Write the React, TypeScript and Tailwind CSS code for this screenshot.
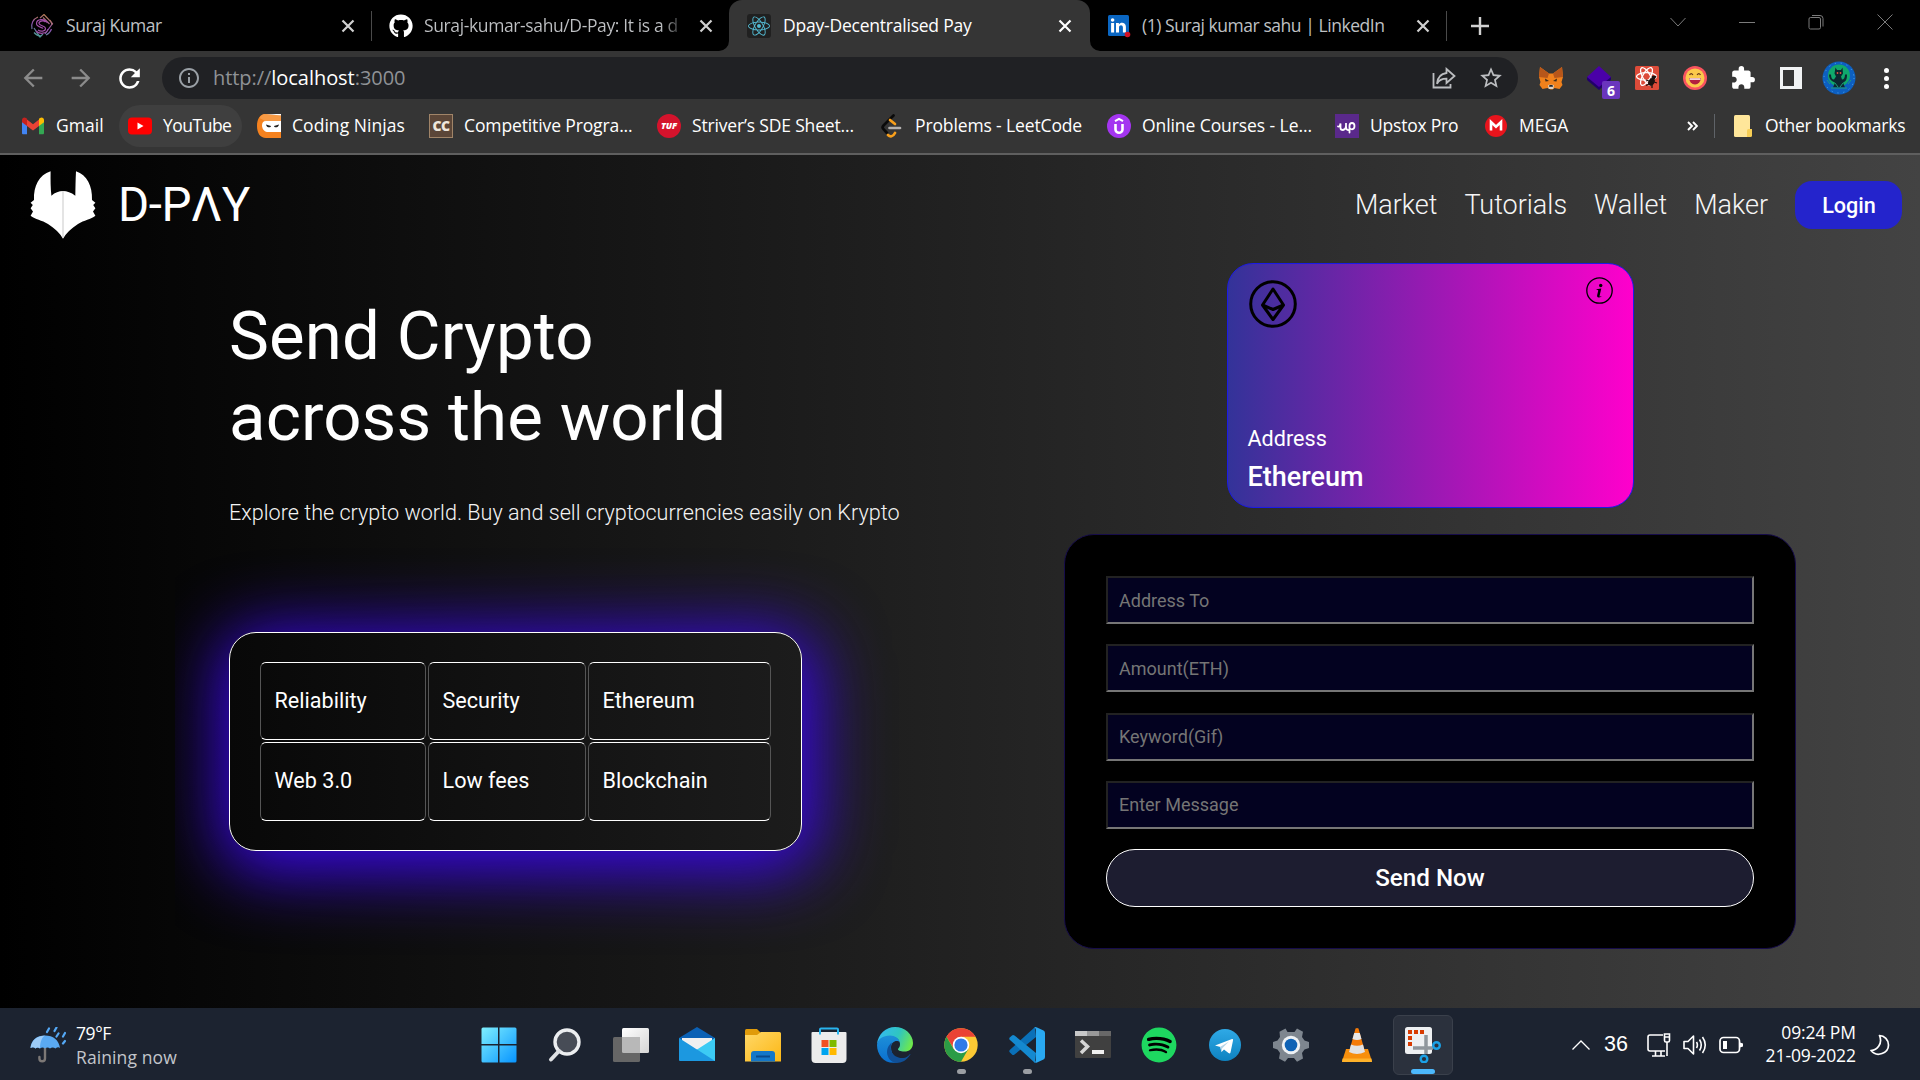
import React from "react";
import { FaGithub, FaReact, FaSpotify } from "react-icons/fa";
import {
  MdArrowBack,
  MdArrowForward,
  MdExtension,
  MdInfoOutline,
  MdRefresh,
  MdStarBorder,
} from "react-icons/md";

/* ---------- browser chrome ---------- */

const Cross = ({ className = "" }: { className?: string }) => (
  <svg viewBox="0 0 14 14" className={`h-[14px] w-[14px] shrink-0 ${className}`}>
    <path d="M1.500 1.500l11 11M12.500 1.500l-11 11" stroke="currentColor" strokeWidth="2.200" />
  </svg>
);

const PortfolioIcon = () => (
  <svg viewBox="0 0 24 24" className="h-6 w-6 shrink-0" fill="none" strokeWidth="1.200">
    <defs>
      <linearGradient id="pf" x1="0.700" y1="0" x2="0.300" y2="1">
        <stop offset="0" stopColor="#b9824a" />
        <stop offset="0.500" stopColor="#8d4fb0" />
        <stop offset="1" stopColor="#4d9a94" />
      </linearGradient>
    </defs>
    <path d="M8 3A10 10 0 0 0 2 15M4 18.500a10 10 0 0 0 7 3.500M16 21a10 10 0 0 0 5.500-6M22 11a10 10 0 0 0-2-5" stroke="url(#pf)" />
    <path d="M10 4l4-3.500 8.500 9L15 20M13 3.500l6.500 6.500M4 14l6 9 3-3" stroke="url(#pf)" />
    <path
      d="M15.500 8c-2-2-7-1-6.500 1.500s6.500 2 6.500 5-5 3.500-7.500 1.500M17.500 9c-3-5-11-4-11 .5 0 4 6 3.500 6.500 5M6 17c3 3.500 11 3 12-2"
      stroke="#a04fa8"
    />
  </svg>
);

const LinkedInIcon = () => (
  <svg viewBox="0 0 24 24" className="h-6 w-6 shrink-0">
    <rect x="1" y="1" width="21" height="21" rx="1.500" fill="#0a66c2" />
    <circle cx="5.600" cy="6" r="1.800" fill="#fff" />
    <path
      d="M4.100 9h3v9.500h-3zM9 9h2.900v1.400c1.400-2.500 7-2.500 7 2.400v5.700h-3v-5c0-3-3.900-2.800-3.900 0v5H9z"
      fill="#fff"
    />
    <circle cx="20.500" cy="20.500" r="2.800" fill="#d11124" />
  </svg>
);

function TabStrip() {
  return (
    <div className="flex h-[51px] items-center bg-black text-[17.5px] text-[#bfc1c4]">
      <div className="flex h-full w-[371px] items-center pl-[30px]">
        <PortfolioIcon />
        <span className="ml-3 grow tracking-[-0.45px] whitespace-nowrap">Suraj Kumar</span>
        <Cross className="mr-4 text-[#d0d0d0]" />
      </div>
      <div className="h-[30px] w-px bg-[#4a4a4a]" />
      <div className="flex h-full w-[357px] items-center pl-[17px]">
        <FaGithub className="h-6 w-6 shrink-0 text-white" />
        <span className="ml-[11px] w-[263px] bg-linear-to-r from-[#bfc1c4] from-90% to-transparent bg-clip-text tracking-[-0.38px] whitespace-nowrap text-transparent">
          Suraj-kumar-sahu/D-Pay: It is a d
        </span>
        <Cross className="ml-[12px] text-[#d0d0d0]" />
      </div>
      <div className="relative flex h-full w-[361px] items-center rounded-t-[13px] bg-[#353535] pl-[18px] text-white">
        <svg viewBox="0 0 10 10" className="absolute bottom-0 -left-[10px] h-[10px] w-[10px]">
          <path d="M10 0v10H0A10 10 0 0 0 10 0z" fill="#353535" />
        </svg>
        <svg viewBox="0 0 10 10" className="absolute -right-[10px] bottom-0 h-[10px] w-[10px]">
          <path d="M0 0v10h10A10 10 0 0 1 0 0z" fill="#353535" />
        </svg>
        <div className="flex h-6 w-6 shrink-0 items-center justify-center rounded-[3px] bg-[#202020]">
          <FaReact className="h-[22px] w-[22px] text-[#53b9d1]" />
        </div>
        <span className="ml-3 grow tracking-[-0.22px] whitespace-nowrap">Dpay-Decentralised Pay</span>
        <Cross className="mr-[18px]" />
      </div>
      <div className="flex h-full w-[356px] items-center pl-[17px]">
        <LinkedInIcon />
        <span className="ml-[11px] grow tracking-[-0.45px] whitespace-nowrap">
          (1) Suraj kumar sahu | LinkedIn
        </span>
        <Cross className="mr-[16px] text-[#d0d0d0]" />
      </div>
      <div className="h-[30px] w-px bg-[#4a4a4a]" />
      <svg viewBox="0 0 18 18" className="ml-6 h-[18px] w-[18px]">
        <path d="M9 0v18M0 9h18" stroke="#d0d0d0" strokeWidth="2.400" />
      </svg>
      <div className="mb-2 ml-auto flex items-center gap-[53px] pr-[27px] text-[#7b7b7b]">
        <svg viewBox="0 0 16 16" className="h-4 w-4" fill="none" stroke="currentColor">
          <path d="M.5 4l7.500 8 7.500-8" />
        </svg>
        <svg viewBox="0 0 16 16" className="h-4 w-4" fill="none" stroke="currentColor">
          <path d="M0 8.500h16" />
        </svg>
        <svg viewBox="0 0 16 16" className="h-4 w-4" fill="none" stroke="currentColor">
          <rect x="1" y="3.500" width="11.500" height="11.500" rx="1.500" />
          <path d="M4 1.500h8a3 3 0 0 1 3 3v8" />
        </svg>
        <svg viewBox="0 0 16 16" className="h-4 w-4" fill="none" stroke="currentColor">
          <path d="M.5.5l15 15M15.500.5l-15 15" />
        </svg>
      </div>
    </div>
  );
}

const ShareIcon = () => (
  <svg viewBox="0 0 24 24" className="h-6 w-6" fill="none" stroke="#bcbec1" strokeWidth="1.800">
    <path d="M1.500 7v14.500h17V18" />
    <path d="M14.500 3l8 7-8 7v-4.300c-4.500 0-7.500 1.300-9.500 5 .5-6 4-10 9.500-10.700z" />
  </svg>
);

const FoxIcon = () => (
  <svg viewBox="0 0 24 24" className="h-6 w-6">
    <path d="M1 1l9 6.500h4L23 1l1 10-1.500 5 1 3-3 4-5-1-2 1.500h-2L8.500 22l-5 1-3-4 1-3L0 11z" fill="#f0811c" />
    <path d="M1 1l9 6.500-1.500 4.500L0 11zM23 1l-9 6.500 1.500 4.500L24 11z" fill="#b7561a" />
    <path d="M6 12.500l4 2.500-3.500.5zM18 12.500L14 15l3.500.5z" fill="#3a2a1c" />
    <path d="M9 19.500l1-.8h4l1 .8-.8 3.500H9.800z" fill="#d8d0c4" />
    <path d="M10.500 19h3l.5 1.800h-4z" fill="#20242b" />
  </svg>
);

const ReactDevIcon = () => (
  <svg viewBox="0 0 24 24" className="h-6 w-6" fill="none">
    <rect width="24" height="24" rx="1.500" fill="#dd4b39" />
    <g stroke="#fff" strokeWidth="1.300">
      <ellipse cx="11.500" cy="10.500" rx="10" ry="3.800" />
      <ellipse cx="11.500" cy="10.500" rx="10" ry="3.800" transform="rotate(60 11.500 10.500)" />
      <ellipse cx="11.500" cy="10.500" rx="10" ry="3.800" transform="rotate(120 11.500 10.500)" />
    </g>
    <ellipse cx="16.500" cy="16" rx="3" ry="4" fill="#1c1210" transform="rotate(30 16.500 16)" />
    <circle cx="18.500" cy="11.500" r="1.900" fill="#1c1210" />
    <path d="M11 14l3 1M11 19.500l4-2M21 10l-2 3M22 17l-3-1M17 22l0-3" stroke="#1c1210" strokeWidth="1.300" />
  </svg>
);

const SmileIcon = () => (
  <svg viewBox="0 0 24 24" className="h-6 w-6">
    <circle cx="12" cy="12" r="12" fill="#f9545f" />
    <circle cx="12" cy="12" r="9.500" fill="#fbc94b" />
    <path d="M6 12h12a6 6.500 0 0 1-12 0z" fill="#b3203f" />
    <path d="M6.500 12.300h11v1.500h-11z" fill="#fff" />
    <path d="M6.500 9q1.700-2.800 3.400 0M14.100 9q1.700-2.800 3.400 0" stroke="#6b3a1a" strokeWidth="1.300" fill="none" />
  </svg>
);

const AvatarIcon = () => (
  <svg viewBox="0 0 34 34" className="h-[34px] w-[34px]">
    <circle cx="17" cy="17" r="16.500" fill="#0d5fc0" />
    <circle cx="17" cy="14.500" r="11" fill="#10a86c" />
    <circle cx="17" cy="17" r="15" fill="none" stroke="#52a9ee" strokeDasharray="1 5" />
    <path
      d="M13.500 6.500l1.500 2.500h4l1.500-2.500.5 6-2 3 1 3c2 0 3-2 3-5h2c0 5-1 7-4 8l2 5H11l2-5c-3-1-6-3-6-8h2c0 3 1 5 3 5l2-3-1.500-3z"
      fill="#0c2830"
    />
    <path d="M9 27h16M13 22l3 4M21 22l-3 4M5 19l3 4M29 19l-3 4" stroke="#1f9d7c" />
    <circle cx="15.500" cy="12" r=".9" fill="#e5503f" />
    <circle cx="18.500" cy="12" r=".9" fill="#e5503f" />
  </svg>
);

function AddressBar() {
  return (
    <div className="flex h-[54px] items-center bg-[#353535]">
      <div className="flex w-[162px] items-center gap-5 pl-[19px]">
        <MdArrowBack className="h-7 w-7 text-[#8b8b8b]" />
        <MdArrowForward className="h-7 w-7 text-[#8b8b8b]" />
        <MdRefresh className="-ml-px h-[31px] w-[31px] text-white" />
      </div>
      <div className="flex h-[42px] w-[1356px] items-center rounded-full bg-[#202124] pr-[14px] pl-[15px]">
        <MdInfoOutline className="h-6 w-6 text-[#9aa0a6]" />
        <span className="ml-[12px] grow text-[20px] tracking-[-0.05px] text-[#8f9296]">
          http://<span className="text-white">localhost</span>:3000
        </span>
        <ShareIcon />
        <MdStarBorder className="ml-[22px] h-[26px] w-[26px] text-[#bcbec1]" />
      </div>
      <div className="ml-[21px] flex items-center">
        <FoxIcon />
        <div className="relative ml-6 h-6 w-6">
          <svg viewBox="0 0 24 24" className="h-6 w-6">
            <path d="M0 14l12 10 12-10v-3H0z" fill="#21006a" />
            <path d="M12 0l12 11-12 10L0 11z" fill="#4a00a8" />
          </svg>
          <div className="absolute top-[15px] left-[15px] flex h-[18px] w-[18px] items-center justify-center rounded-[2px] bg-[#6a35bd] text-[14px] font-bold text-white">
            6
          </div>
        </div>
        <div className="ml-6">
          <ReactDevIcon />
        </div>
        <div className="ml-6">
          <SmileIcon />
        </div>
        <MdExtension className="ml-[23px] h-[26px] w-[26px] text-white" />
        <div className="ml-[24px] h-[22px] w-[22px] border-[3px] border-r-8 border-[#f1f3f4]" />
        <div className="ml-[20px]">
          <AvatarIcon />
        </div>
        <div className="ml-[28px] flex flex-col gap-[3px]">
          <div className="h-[5px] w-[5px] rounded-full bg-white" />
          <div className="h-[5px] w-[5px] rounded-full bg-white" />
          <div className="h-[5px] w-[5px] rounded-full bg-white" />
        </div>
      </div>
    </div>
  );
}

const GmailIcon = () => (
  <svg viewBox="0 0 24 24" className="h-6 w-6">
    <path d="M1 6v13c0 .8.500 1.300 1.300 1.300H6V10z" fill="#4285f4" />
    <path d="M23 6v13c0 .8-.5 1.300-1.300 1.300H18V10z" fill="#34a853" />
    <path d="M6 5.500l6 4.800 6-4.800V12l-6 4.500L6 12z" fill="#ea4335" />
    <path d="M1 6c0-2.300 2.300-3.300 4-2l1 .8V12L1 8.300z" fill="#c5221f" />
    <path d="M23 6c0-2.300-2.300-3.300-4-2l-1 .8V12l5-3.700z" fill="#fbbc04" />
  </svg>
);

const YouTubeIcon = () => (
  <svg viewBox="0 0 24 24" className="h-6 w-6">
    <rect x="0" y="3.500" width="24" height="17" rx="4" fill="#f00" />
    <path d="M9.500 8.500v7l6-3.500z" fill="#fff" />
  </svg>
);

const NinjaIcon = () => (
  <svg viewBox="0 0 24 24" className="h-6 w-6">
    <path d="M24 1.500L8 0C3 0 0 5 0 12s3 12 9 12h15v-6H10V6h14z" fill="#f5821f" />
    <path d="M24 1.500L8 0C6 0 4 1.500 2.500 4L8 7h16z" fill="#f79a45" />
    <path d="M9 0h15v1.500z" fill="#fff" />
    <path d="M24 7H9c-3 0-4 2-4 4.500S7 18 10 18h14z" fill="#fff" />
    <path d="M9 10.500l5 1.500c0 2-4.500 2-5-1.500zM22 10.500L17 12c0 2 4.500 2 5-1.500z" fill="#222" />
  </svg>
);

const LeetIcon = () => (
  <svg viewBox="0 0 24 24" className="h-6 w-6" fill="none" strokeWidth="2.700" strokeLinecap="round">
    <path d="M13.500 1.500L3.500 11.500c-1 1-1 2.600 0 3.600L7 19" stroke="#0a0a0a" />
    <path d="M10 6l5 4" stroke="#f89f1b" />
    <path d="M8 21c2 2 5 2 7-2" stroke="#f89f1b" />
    <path d="M9.500 14H20" stroke="#b3b1b0" />
  </svg>
);

const UdemyIcon = () => (
  <svg viewBox="0 0 24 24" className="h-6 w-6" fill="none" stroke="#fff">
    <circle cx="12" cy="12" r="12" fill="#a435f0" stroke="none" />
    <path d="M8 7.200l4-2.400 4 2.400" strokeWidth="2" />
    <path d="M8.500 10v5.500a3.500 3.300 0 0 0 7 0V10" strokeWidth="2.600" />
  </svg>
);

const UpstoxIcon = () => (
  <svg viewBox="0 0 24 24" className="h-6 w-6" fill="none" stroke="#fff" strokeWidth="1.800" strokeLinecap="round">
    <rect width="24" height="24" fill="#5a298b" stroke="none" />
    <path d="M3 12.500q2 .5 2.500-3v4.500q0 2 2.500 2 3-.5 3-4V9v3.500q0 3.500 2 3.500M14.500 18.500V12q0-3 2.500-3t2.500 3-2.500 3.300q-2 0-2.500-1.500" />
  </svg>
);

const MegaIcon = () => (
  <svg viewBox="0 0 24 24" className="h-6 w-6">
    <circle cx="12" cy="12" r="11" fill="#e8141c" />
    <path d="M7 16.500V8l5 4.800L17 8v8.500" fill="none" stroke="#fff" strokeWidth="2.600" />
  </svg>
);

function Bookmark({
  icon,
  label,
  width,
  track = "tracking-[-0.22px]",
}: {
  icon: React.ReactNode;
  label: string;
  width: string;
  track?: string;
}) {
  return (
    <div className={`flex shrink-0 items-center gap-[11px] ${width}`}>
      {icon}
      <span className={`mb-px whitespace-nowrap ${track}`}>{label}</span>
    </div>
  );
}

function BookmarksBar() {
  return (
    <div className="flex h-12 items-center bg-[#353535] pb-[6px] pl-[21px] text-[17.5px] text-white">
      <Bookmark icon={<GmailIcon />} label="Gmail" width="w-[98px]" track="tracking-[0.05px]" />
      <div className="flex h-[42px] w-[123px] items-center rounded-full bg-[#3f3f3f] pl-[9px]">
        <Bookmark icon={<YouTubeIcon />} label="YouTube" width="w-[110px]" track="tracking-[-0.500px]" />
      </div>
      <Bookmark icon={<NinjaIcon />} label="Coding Ninjas" width="ml-[15px] w-[172px]" track="tracking-[0.05px]" />
      <Bookmark
        icon={
          <div className="flex h-6 w-6 items-center justify-center border border-[#a08468] bg-[#5b4638] text-[14px] leading-none font-extrabold tracking-[-0.5px] text-[#eee6dc]">
            CC
          </div>
        }
        label="Competitive Progra..."
        width="w-[228px]"
        track="tracking-[-0.12px]"
      />
      <Bookmark
        icon={
          <div className="flex h-6 w-6 items-center justify-center rounded-full bg-[#d4132c] text-[9px] font-extrabold tracking-[-0.2px] text-white italic">
            TUF
          </div>
        }
        label="Striver’s SDE Sheet..."
        width="w-[223px]"
        track="tracking-[-0.17px]"
      />
      <Bookmark icon={<LeetIcon />} label="Problems - LeetCode" width="w-[227px]" track="tracking-[-0.13px]" />
      <Bookmark icon={<UdemyIcon />} label="Online Courses - Le..." width="w-[228px]" track="tracking-[-0.08px]" />
      <Bookmark icon={<UpstoxIcon />} label="Upstox Pro" width="w-[149px]" />
      <Bookmark icon={<MegaIcon />} label="MEGA" width="w-[203px]" track="tracking-[0px]" />
      <svg viewBox="0 0 11 10" className="h-[10px] w-[11px]" fill="none" stroke="#fff" strokeWidth="1.900">
        <path d="M1 1l4 4-4 4M6 1l4 4-4 4" />
      </svg>
      <div className="ml-4 h-6 w-px bg-[#5f6368]" />
      <svg viewBox="0 0 18 22" className="ml-[19px] h-[22px] w-[18px]">
        <path d="M0 1.500Q0 0 1.500 0h13Q16 0 16 1.500V22H1.500Q0 22 0 20.500z" fill="#ffe69a" />
        <path d="M13 15.500q0-1.500 1.500-1.500H18v6.500q0 1.500-1.500 1.500H13z" fill="#f7ce55" />
      </svg>
      <span className="mb-px ml-[13px] tracking-[-0.22px] whitespace-nowrap">Other bookmarks</span>
    </div>
  );
}

/* ---------- D-Pay page ---------- */

const WolfLogo = () => (
  <svg viewBox="0 0 66 68" className="h-[68px] w-[66px]">
    <path
      d="M20.600.3C9 4 3.500 15 4 29L.6 31.700 2.800 34 .6 37.300 3 40.500.6 44.700C5 48.500 12 49 18 53c7 4.500 12 9 15 14.700C36 62 41 57.500 48 53c6-4 13-4.500 17.400-8.300L63 40.500l2.400-3.200L63.200 34l2.200-2.300L62 29C62.500 15 57 4 46 .3 45.500 9 45.500 17 45.300 24.700 41 21.500 37 20 33 20s-8 1.500-11.600 4.700C20.500 17 20.500 9 20.600.3z"
      fill="#fff"
    />
    <path d="M33 20v46" stroke="#c9c9c9" />
  </svg>
);

function NavBar() {
  return (
    <div className="flex h-[100px] items-center pr-[18px] pl-[30px]">
      <WolfLogo />
      <span className="mt-[2px] ml-[22px] text-[47.5px] leading-none tracking-[-0.4px]">D-PΛY</span>
      <div className="ml-auto flex items-center gap-[27px] text-[27px] leading-8 font-light text-[#f5f5f5]">
        <span>Market</span>
        <span>Tutorials</span>
        <span>Wallet</span>
        <span>Maker</span>
        <button className="h-12 w-[107px] rounded-[17px] bg-[#2424cc] pt-px pl-px text-[21.6px] font-medium text-white">
          Login
        </button>
      </div>
    </div>
  );
}

const features = ["Reliability", "Security", "Ethereum", "Web 3.0", "Low fees", "Blockchain"];

function Intro() {
  return (
    <div className="w-[1064px] pt-[41px]">
      <h1 className="ml-[229px] text-[67.2px] leading-[81px] tracking-[0.12px]">
        Send Crypto
        <br />
        across the world
      </h1>
      <p className="mt-[42px] ml-[229px] text-[21.6px] leading-[26px] font-light text-[#f4f4f4]">
        Explore the crypto world. Buy and sell cryptocurrencies easily on Krypto
      </p>
      <div className="ml-[175px] overflow-hidden pt-[106px] pb-[150px] pl-[54px]">
        <div className="w-[573px] rounded-[27px] border border-white px-[30px] py-[29px] shadow-[3px_10px_68px_12px_#3a08e6]">
          <div className="grid grid-cols-[165.5px_157.5px_183px] grid-rows-[78px_79px] gap-x-[2.500px] gap-y-[2px]">
            {features.map((f) => (
              <div
                key={f}
                className="flex items-center rounded-[6px] border border-x-[#555] border-y-white pl-[13.5px] text-[21.6px]"
              >
                {f}
              </div>
            ))}
          </div>
        </div>
      </div>
    </div>
  );
}

const fields = ["Address To", "Amount(ETH)", "Keyword(Gif)", "Enter Message"];

function SendPanel() {
  return (
    <div className="flex w-[732px] flex-col items-center gap-[26px] pt-2">
      <div className="flex h-[245px] w-[407px] flex-col justify-between rounded-[26px] border border-[#1b1be6] bg-[linear-gradient(to_right,#333399,#ff00cc)] px-[20px] pt-4 pb-[11px]">
        <div className="flex items-start justify-between">
          <svg viewBox="0 0 48 48" className="ml-[1px] h-12 w-12" fill="none" stroke="#000" strokeWidth="3">
            <circle cx="24" cy="24" r="22.300" />
            <path d="M24 9L13.500 25 24 39.500 34.500 25z" strokeLinejoin="round" />
            <path d="M13.500 25L24 29.500 34.500 25" strokeLinejoin="round" />
          </svg>
          <svg viewBox="0 0 27 27" className="-mt-[3px] h-[27px] w-[27px]" fill="none">
            <circle cx="13.500" cy="13.500" r="12.700" stroke="#000" strokeWidth="1.300" />
            <circle cx="14.700" cy="8.500" r="1.700" fill="#000" />
            <path
              d="M10.500 12.300l4.800-.7-1.700 7.200q-.2 1 .6.8l1.200-.5-.1.500q-1.300 1.100-2.700 1-1.800-.2-1.500-2l1.100-4.800q.2-.8-.6-.9l-1.100-.1z"
              fill="#000"
            />
          </svg>
        </div>
        <div>
          <div className="text-[21.6px] leading-[26px]">Address</div>
          <div className="mt-[6px] text-[27px] leading-[38px] font-medium">Ethereum</div>
        </div>
      </div>
      <div className="flex h-[415px] w-full flex-col gap-[20.300px] rounded-[30px] border border-[#160c4a] bg-black p-[41px]">
        {fields.map((f) => (
          <input
            key={f}
            placeholder={f}
            className="h-12 w-full shrink-0 border-2 border-t-[#222] border-r-[#767676] border-b-[#767676] border-l-[#222] bg-[#030220] pl-[11px] text-[18px] placeholder:text-[#757575]"
          />
        ))}
        <button className="h-[58px] w-full shrink-0 rounded-full border border-white bg-[#1d1d30] text-[24.200px] font-medium">
          Send Now
        </button>
      </div>
    </div>
  );
}

/* ---------- taskbar ---------- */

const S = ({ children }: { children: React.ReactNode }) => (
  <svg viewBox="0 0 36 36" className="h-9 w-9">
    {children}
  </svg>
);

const taskIcons: { icon: React.ReactNode; mark?: "dot" | "active" }[] = [
  {
    icon: (
      <S>
        <defs>
          <linearGradient id="win" x1="0" y1="0" x2="1" y2="1">
            <stop offset="0" stopColor="#7ff0ff" />
            <stop offset="1" stopColor="#0794ff" />
          </linearGradient>
        </defs>
        <path
          d="M2 .5h15V17H.5V2Q.5.5 2 .5zM18.500.5H34q1.500 0 1.500 1.500v15h-17zM.5 18.500h16.500v17H2Q.5 35.500.5 34zM18.500 18.500h17V34q0 1.500-1.500 1.500H18.500z"
          fill="url(#win)"
        />
      </S>
    ),
  },
  {
    icon: (
      <S>
        <circle cx="20" cy="15" r="12" fill="#474c56" stroke="#eceef0" strokeWidth="3.400" />
        <path d="M12 24L4 32.500" stroke="#dfe1e4" strokeWidth="4" strokeLinecap="round" />
      </S>
    ),
  },
  {
    icon: (
      <S>
        <defs>
          <linearGradient id="tv" x1="0" y1="0" x2="1" y2="1">
            <stop offset="0" stopColor="#fff" />
            <stop offset="1" stopColor="#d5d5d5" />
          </linearGradient>
        </defs>
        <rect x="9" y="1" width="27" height="25" rx="1.500" fill="url(#tv)" />
        <rect x="0" y="10" width="27" height="25" rx="1.500" fill="#666" />
        <path d="M9 10h18v16H10.500Q9 26 9 24.500z" fill="#b8b8b8" />
      </S>
    ),
  },
  {
    icon: (
      <S>
        <path d="M0 11L18 0l18 11v6H0z" fill="#0b61b5" />
        <path d="M3 11h30v8L18 27 3 19z" fill="#f2f2f2" />
        <path d="M36 11v23H0z" fill="#3ccbf4" />
        <path d="M0 11l36 23H1.500Q0 34 0 32.500z" fill="#1c98e0" />
        <path d="M3 11h30L18 22z" fill="#f0f0f0" />
      </S>
    ),
  },
  {
    icon: (
      <S>
        <defs>
          <linearGradient id="fo" x1="0" y1="0" x2="1" y2="1">
            <stop offset="0" stopColor="#ffd868" />
            <stop offset="1" stopColor="#fcb714" />
          </linearGradient>
        </defs>
        <path d="M0 3.500Q0 2 1.500 2H12l4 4v5H0z" fill="#e09b0a" />
        <path d="M0 8h12l4-3h18.500Q36 5 36 6.500v28H0z" fill="url(#fo)" />
        <path d="M6 34.500V27q0-3 3-3h18q3 0 3 3v7.500z" fill="#1477c9" />
        <path d="M11 29.500h14" stroke="#0a4a8c" strokeWidth="2" />
      </S>
    ),
  },
  {
    icon: (
      <S>
        <path d="M9 6V2.500Q9 1.500 10 1.500h16q1 0 1 1V6" fill="none" stroke="#28b4ee" strokeWidth="2" />
        <path d="M.5 6Q.5 5 1.500 5h33q1 0 1 1v26q0 4-4 4h-27q-4 0-4-4z" fill="#ececec" />
        <path d="M9 5v2.500M27 5v2.500" stroke="#28b4ee" strokeWidth="2" />
        <path d="M10.500 13h7v7h-7z" fill="#f25022" />
        <path d="M18.500 13h7v7h-7z" fill="#7fba00" />
        <path d="M10.500 21h7v7h-7z" fill="#00a4ef" />
        <path d="M18.500 21h7v7h-7z" fill="#ffb900" />
      </S>
    ),
  },
  {
    icon: (
      <S>
        <defs>
          <linearGradient id="e1" x1="0" y1="0.300" x2="1" y2="0.600">
            <stop offset="0" stopColor="#35b9f1" />
            <stop offset="0.550" stopColor="#2fc5c0" />
            <stop offset="1" stopColor="#6fe94b" />
          </linearGradient>
          <linearGradient id="e2" x1="0" y1="0" x2="0" y2="1">
            <stop offset="0" stopColor="#1d8fd8" />
            <stop offset="1" stopColor="#0a6fd0" />
          </linearGradient>
        </defs>
        <path
          d="M0 17C1 7 9 0 18 0c10 0 18 7.500 18 16 0 6-4 8.500-8.500 8.500S20.500 23 21 22c1.500-1.500 2-3 2-5 0-4-4-7.500-9-7.500-6 0-12 3-14 7.500z"
          fill="url(#e1)"
        />
        <path d="M0 18c.5-6 6-9.500 13-9.500 5 0 9 3 10 7-3-3-9-1-9 5 0 8 6 13.500 12 13-15 7-26-3-26-15.500z" fill="url(#e2)" />
        <path d="M15 15.500c-4 9 3 16 11 15.500 3 0 5.500-2 7-4 .5 0 .5.500 0 1C30 33 25 36 19 36c-10-2-12-15-4-20.500z" fill="#104f96" />
      </S>
    ),
  },
  {
    icon: (
      <S>
        <circle cx="18" cy="18" r="16.700" fill="#fcc934" />
        <path d="M3.500 9.700A16.700 16.700 0 0 1 32.500 9.700H18L11 22z" fill="#ea4335" />
        <path d="M3.500 9.700A16.700 16.700 0 0 0 18 34.700L25.200 22.200 10.800 22.200z" fill="#2b9c46" />
        <circle cx="18" cy="18" r="8.300" fill="#fff" />
        <circle cx="18" cy="18" r="6.600" fill="#2f7ae8" />
      </S>
    ),
    mark: "dot",
  },
  {
    icon: (
      <S>
        <path d="M26 0l1 10L5.500 27.500Q4 28.500 3 27.500L.7 25.300Q-.3 24 1 22.800z" fill="#0a70b8" />
        <path d="M27 26l-1 10L1 13Q-.3 12 .7 10.600L3 8.500q1-1 2.500 0z" fill="#1489d0" />
        <path d="M26 .2Q26.500-.2 28 .4L34.500 3.500Q36 4.200 36 6v24q0 1.800-1.500 2.500L28 35.600q-1.500.6-2.500-.6 1.500 0 1.500-2V3q0-2-1.500-2z" fill="#29a9f2" />
      </S>
    ),
    mark: "dot",
  },
  {
    icon: (
      <S>
        <rect x="0" y="4" width="36" height="27" rx="1" fill="#404040" />
        <path d="M0 4h12v5H0z" fill="#c8c8c8" />
        <path d="M12 4h12v5H12z" fill="#999" />
        <path d="M24 4h12v5H24z" fill="#686868" />
        <path d="M6 13.500l6.500 6L6 26" fill="none" stroke="#d6d6d6" strokeWidth="3.500" />
        <path d="M17 25h12" stroke="#f0f0f0" strokeWidth="4" />
      </S>
    ),
  },
  {
    icon: (
      <div className="flex h-9 w-9 items-center justify-center rounded-full bg-[radial-gradient(#000_60%,transparent_62%)]">
        <FaSpotify className="h-9 w-9 text-[#1ed760]" />
      </div>
    ),
  },
  {
    icon: (
      <S>
        <defs>
          <linearGradient id="tg" x1="0" y1="0" x2="0" y2="1">
            <stop offset="0" stopColor="#2fa9e6" />
            <stop offset="1" stopColor="#0e82c0" />
          </linearGradient>
        </defs>
        <circle cx="18" cy="18" r="16" fill="url(#tg)" />
        <path d="M8 18.500L25 12q1.500-.5 1 1.500l-2.500 12q-.5 1.500-2 .5l-4.500-3.500-2.500 2.500-1-5z" fill="#fff" />
        <path d="M13 20l9-5.500-6.800 6.700-.7 3.800z" fill="#b5d5e8" />
      </S>
    ),
  },
  {
    icon: (
      <S>
        <path
          d="M14.500 5L12.500 1.500 6.500 4.800 7 10 4.500 13.500 0 15v6l4.500 1.500L7 26l-1 5.500 6 3.300 3-3.800h6l3 3.800 6-3.300L29 26l2.500-3.500L36 21v-6l-4.500-1.500L29 10l1-5.200-6-3.300L21.500 5z"
          fill="#7e868f"
        />
        <circle cx="18" cy="18" r="9.200" fill="#eef1f4" />
        <circle cx="18" cy="18" r="6.300" fill="#0f62b5" />
      </S>
    ),
  },
  {
    icon: (
      <S>
        <path d="M7 22h22l4 12.500H3z" fill="#f78f0c" />
        <path d="M3.500 31.500h29l.5 3.500H3z" fill="#ffb22a" />
        <path d="M16.500 1.500q1.500-1 3 0L26 25q-8 4.500-16 0z" fill="#f47a07" />
        <path d="M15.200 6h5.600l1.700 6q-4.500 2-9 0z" fill="#e8e8e8" />
        <path d="M12 17.500q6 2.500 12 0l2 7.500q-8 4-16 0z" fill="#e2e2e2" />
      </S>
    ),
  },
  {
    icon: (
      <S>
        <rect x="0" y="0" width="27" height="27" rx="2.500" fill="#eef0f2" />
        <path d="M3 3h4v4H3zM9 3h4v4H9zM15 3h4v4h-4zM3 9h4v4H3zM3 15h4v4H3z" fill="#d83b01" />
        <path d="M21 8v19M8 21h20" stroke="#8f969c" strokeWidth="3.500" />
        <circle cx="31.500" cy="18.500" r="3.300" fill="none" stroke="#1ba1e6" strokeWidth="2.400" />
        <circle cx="19" cy="32" r="3.300" fill="none" stroke="#1ba1e6" strokeWidth="2.400" />
      </S>
    ),
    mark: "active",
  },
];

const UmbrellaIcon = () => (
  <svg viewBox="0 0 36 36" className="h-9 w-9" fill="none">
    <path d="M15 20v11.500a2.800 2.800 0 0 1-5.600 0V30" stroke="#7c7876" strokeWidth="2.400" strokeLinecap="round" />
    <path d="M.5 21C1 13 7 8.500 15 8.500S29 13 30 21q-2-1.500-4.500.5-3-2-5.500 0-2.500-2-5 0-2.500-2-5 0-2.500-2-4.500 0-2.500-2-5-.5z" fill="#5aa9f2" />
    <path d="M10 21.500C10 15 12 10 15 8.500 6 9 1.500 14 .5 21q3-1.500 5 .5 2-2 4.500 0z" fill="#9ccbf7" />
    <path d="M19 1.500l-2 3.500M26.500.5l-2 3.500M28.500 6.500l-2 3M35 6l-2 3.500M35 14l-2 2.500" stroke="#54a8f5" strokeWidth="2.200" strokeLinecap="round" />
  </svg>
);

function Taskbar() {
  return (
    <div className="flex h-[72px] items-center bg-[#1c2330] pt-[2px] text-[17.5px] text-white">
      <div className="flex w-[466px] shrink-0 items-center pl-[30px]">
        <UmbrellaIcon />
        <div className="ml-[10px] leading-6">
          <div className="tracking-[-0.4px]">79°F</div>
          <div className="tracking-[0.1px] text-[#c3c6cb]">Raining now</div>
        </div>
      </div>
      {taskIcons.map(({ icon, mark }, i) => (
        <div key={i} className="flex h-full w-[66px] shrink-0 items-center justify-center">
          <div
            className={
              mark === "active"
                ? "relative flex h-[60px] w-[60px] items-center justify-center rounded-[6px] border border-[#3a404b] bg-[#2b313d]"
                : "relative flex h-[60px] w-[60px] items-center justify-center"
            }
          >
            {icon}
            {mark === "dot" && (
              <div className="absolute bottom-[1px] left-[26px] h-[5px] w-[9px] rounded-full bg-[#9b9ea3]" />
            )}
            {mark === "active" && (
              <div className="absolute bottom-0 left-[17px] h-[5px] w-6 rounded-full bg-[#4cb8fb]" />
            )}
          </div>
        </div>
      ))}
      <div className="mb-px ml-[116px] flex items-center">
        <svg viewBox="0 0 18 10" className="h-[10px] w-[18px]" fill="none" stroke="#fff" strokeWidth="1.300">
          <path d="M.5 9.500L9 1l8.500 8.500" />
        </svg>
        <span className="ml-[14px] font-['Liberation_Sans',sans-serif] text-[21.500px]">36</span>
        <svg viewBox="0 0 24 24" className="ml-[19px] h-6 w-6" fill="none" stroke="#fff" strokeWidth="1.600">
          <path d="M16 2H3Q1 2 1 4v12q0 2 2 2h15M5 23h13M8.500 18v5M14 18v5" />
          <path d="M17.500 1h5v6.500q0 1.500-1.500 1.500h-2q-1.500 0-1.500-1.500zM17.500 4h5M20 9v14" />
        </svg>
        <svg viewBox="0 0 24 24" className="ml-3 h-6 w-6" fill="none" stroke="#fff" strokeWidth="1.600" strokeLinejoin="round">
          <path d="M1 8.500h4L10.500 3v18L5 15.500H1z" />
          <path d="M13.500 9q1.800 3 0 6M16.500 6.500q3.500 5.500 0 11M19.500 4q5.500 8 0 16" />
        </svg>
        <svg viewBox="0 0 24 24" className="ml-3 h-6 w-6" fill="none" stroke="#fff" strokeWidth="1.700">
          <rect x="1" y="4.500" width="19.500" height="15" rx="3.500" />
          <path d="M4 8h4v8H4z" fill="#fff" stroke="none" />
          <path d="M21 9.500l3 1v3l-3 1z" fill="#fff" stroke="none" />
        </svg>
        <div className="mb-px ml-[21px] w-[92px] text-right leading-[23px] tracking-[-0.1px] whitespace-nowrap">
          <div>09:24 PM</div>
          <div>21-09-2022</div>
        </div>
        <svg viewBox="0 0 20 22" className="ml-[14px] h-[22px] w-5" fill="none" stroke="#fff" strokeWidth="1.700">
          <path d="M9.500 1.500c5 0 9 4.500 9 9.500 0 8-11.500 13-17.500 5.500C7 16 13 10 9.500 1.500z" strokeLinejoin="round" />
        </svg>
      </div>
    </div>
  );
}

export default function App() {
  return (
    <div className="flex h-[1080px] w-[1920px] flex-col overflow-hidden font-['Open_Sans',sans-serif]">
      <TabStrip />
      <AddressBar />
      <BookmarksBar />
      <div className="h-[2px] shrink-0 bg-[#5f5f5f]" />
      <main className="h-[853px] overflow-hidden bg-[linear-gradient(to_right,#000000,#434343)] font-['Roboto',sans-serif] text-white">
        <NavBar />
        <div className="flex">
          <Intro />
          <SendPanel />
        </div>
      </main>
      <Taskbar />
    </div>
  );
}
